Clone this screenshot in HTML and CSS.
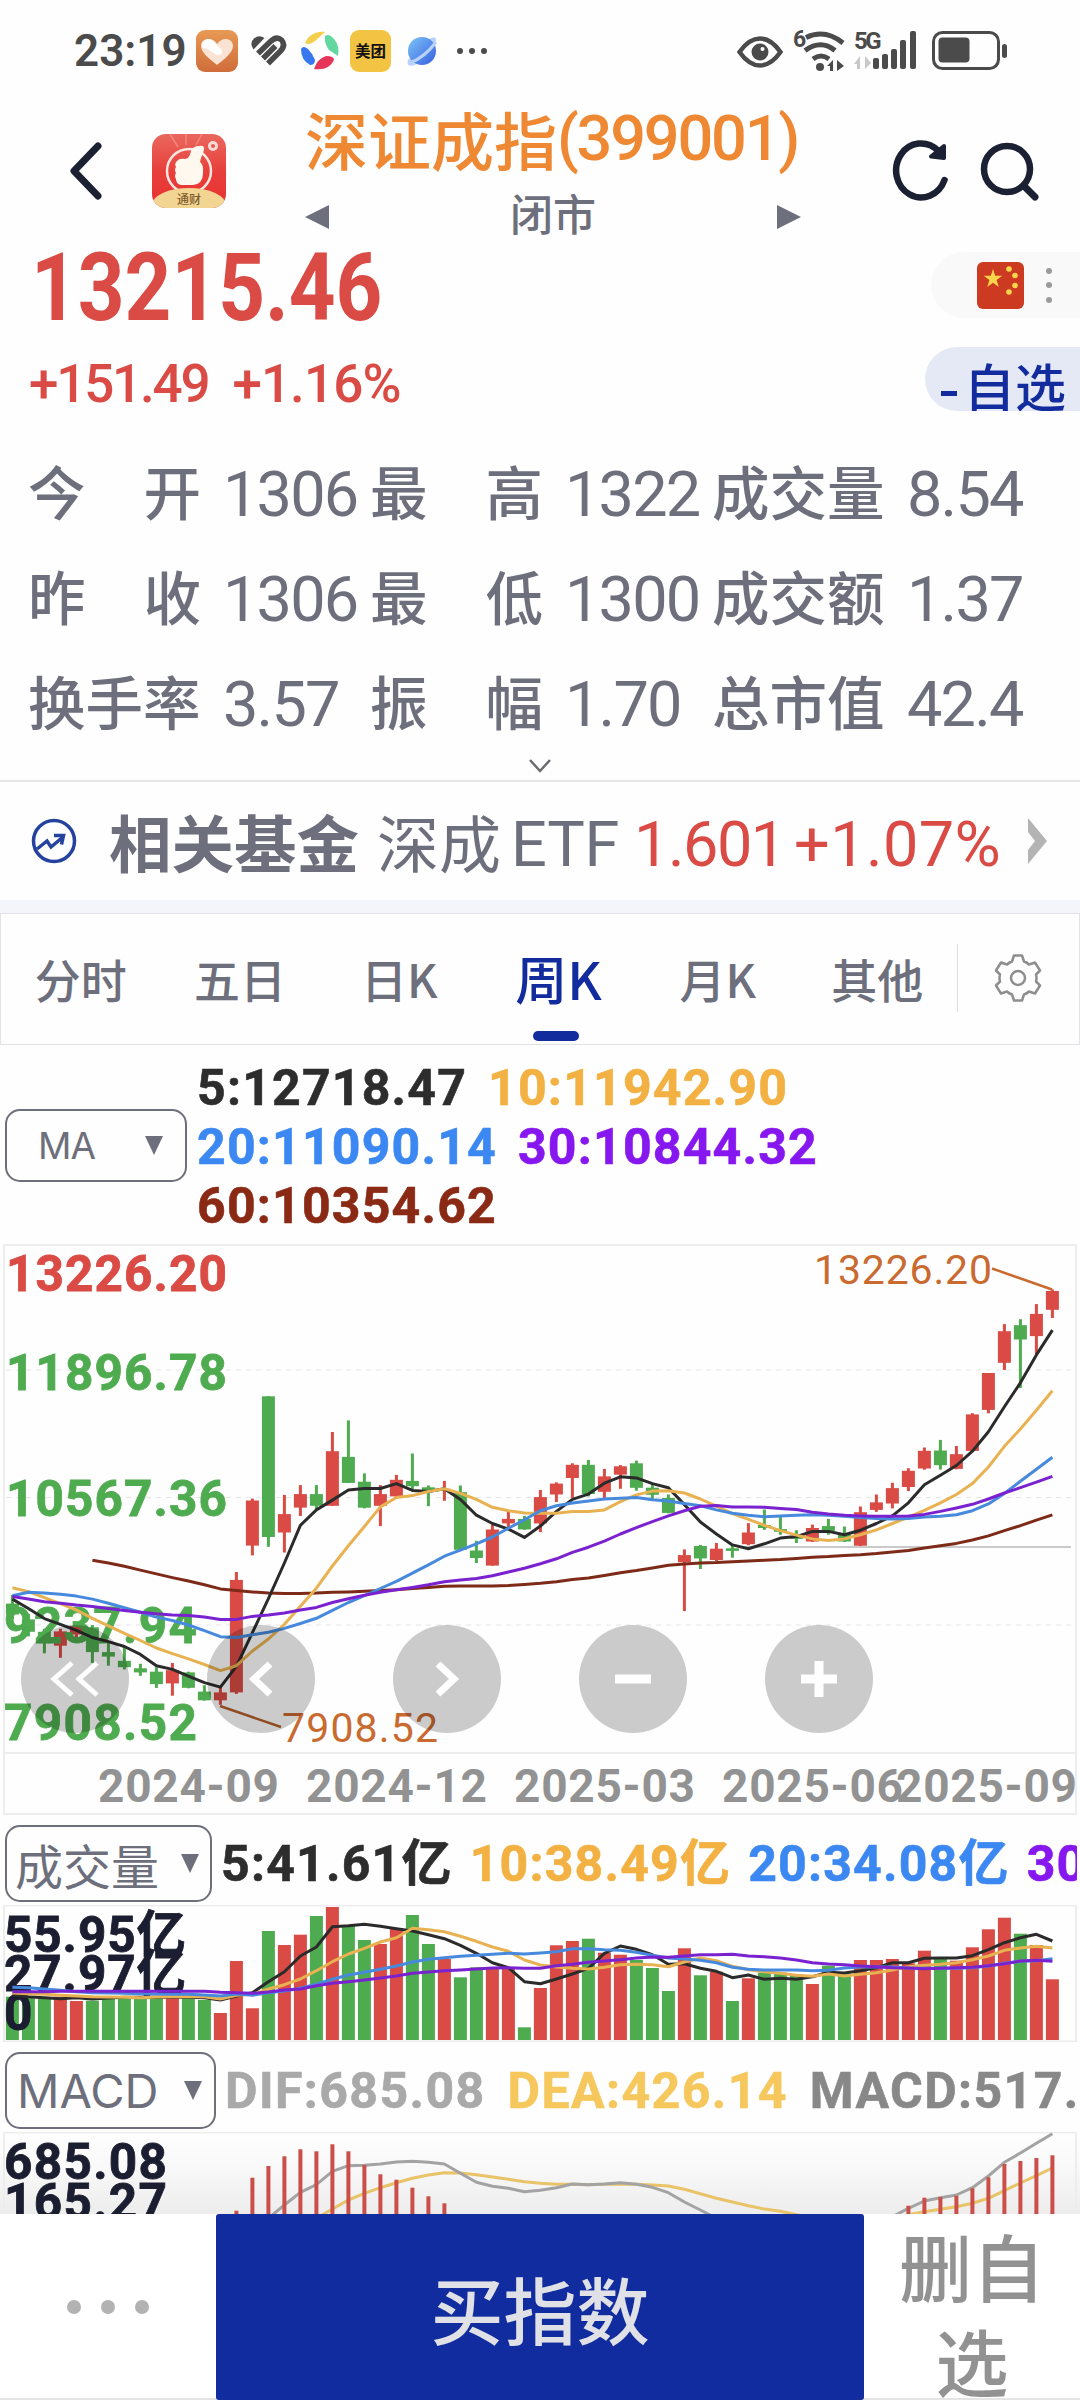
FILE: index.html
```html
<!DOCTYPE html>
<html lang="zh-CN">
<head>
<meta charset="utf-8">
<title>深证成指</title>
<link rel="stylesheet" href="styles.css">
</head>
<body>
<div class="screen">
  <div class="status">
    <span class="clock">23:19</span>
    <svg class="s-heart" width="42" height="42" viewBox="0 0 42 42"><defs><linearGradient id="og" x2="0" y2="1"><stop offset="0" stop-color="#e79a55"/><stop offset="1" stop-color="#cf6c3a"/></linearGradient></defs><rect width="42" height="42" rx="9" fill="url(#og)"/><path d="M21 35C14 29 5 23 5 16 5 11 9 9 12 9 17 9 20 12 21 14 23 11 26 9 30 9 34 9 37 12 37 16 37 23 27 30 21 35Z" fill="#fae3d2"/><path d="M6 17Q5 10 12 9q5 0 8 5l6 6q1 5-4 5-3 0-6-3-4-3-10-5z" fill="#fff"/></svg>
    <svg class="s-stripe" width="38" height="34" viewBox="0 0 38 34"><path d="M3.500 15.500Q-1 9 4 4.500 9 .5 14.500 4Z" fill="#4b4b4b"/><g fill="none" stroke="#4b4b4b" stroke-width="5.600"><path d="M8 19.500L20.500 7.500Q26.500 1.500 31.500 6 36 11 30.500 17L18 29.500"/><path d="M13 24.500L25.500 12"/></g></svg>
    <svg class="s-ring" width="40" height="40" viewBox="0 0 40 40"><path d="M5 12C9 3 17 0 25 1L15 10Q9 15 5 12Z" fill="#f3cf4b"/><path d="M25 5Q29 2 34 8 40 15 38 25L29 19Q24 12 25 5Z" fill="#62d7a0"/><path d="M1 18Q3 14 8 18 13 23 15 29 15 34 10 34 1 29 1 18Z" fill="#3778ef"/><path d="M14 38Q17 28 26 25 34 25 34 29 29 40 14 38Z" fill="#e63558"/></svg>
    <span class="meituan">美团</span>
    <svg class="s-planet" width="32" height="32" viewBox="0 0 32 32"><defs><linearGradient id="bg" x2="1" y2="1"><stop offset="0" stop-color="#7dc4f8"/><stop offset="1" stop-color="#365fe0"/></linearGradient></defs><path d="M23 4Q31 0 30 6L9 30Q0 33 2 25Z" fill="#b8d2fb"/><circle cx="16" cy="16" r="14" fill="url(#bg)"/><path d="M4 28Q19 22 30 7" fill="none" stroke="#b8d2fb" stroke-width="3"/></svg>
    <span class="s-more"><i></i><i></i><i></i></span>
    <svg class="s-eye" width="46" height="32" viewBox="0 0 46 32"><path d="M2.500 16Q12 2.500 23 2.500T43.500 16Q34 29.500 23 29.500T2.500 16Z" fill="none" stroke="#4b4b4b" stroke-width="4.500"/><circle cx="23" cy="16" r="8.500" fill="#4b4b4b"/><circle cx="25.500" cy="13" r="2" fill="#fff"/></svg>
    <svg class="s-wifi" width="52" height="44" viewBox="0 0 52 44"><text x="0" y="18" class="tiny six">6</text><g fill="none" stroke="#4b4b4b" stroke-width="5"><path d="M13 8.500Q32-.5 50 14M12 21.500Q28 10 42 21.500M20 30Q28 24 36 30"/></g><circle cx="27" cy="38" r="4" fill="#4b4b4b"/><path d="M34 37l6-6v11h-3v-5zM51 37l-7-6v11l7-5z" fill="#4b4b4b"/></svg>
    <svg class="s-signal" width="64" height="44" viewBox="0 0 64 44"><text x="0" y="20" class="tiny five">5G</text><path d="M0 35l6-8v13h-3v-5zM17 34l-6-7v13z" fill="#c8c8c8"/><g fill="#4b4b4b"><rect x="19" y="29" width="6" height="11" rx="2"/><rect x="28" y="25" width="6" height="15" rx="2"/><rect x="37" y="20" width="6" height="20" rx="2"/><rect x="46" y="11" width="6" height="29" rx="2"/><rect x="56" y="2" width="6" height="38" rx="2"/></g></svg>
    <svg class="s-batt" width="76" height="40" viewBox="0 0 76 40"><rect x="1.500" y="1.500" width="65" height="36" rx="9" fill="none" stroke="#4b4b4b" stroke-width="3"/><rect x="6.500" y="6.500" width="31" height="25" rx="4" fill="#4b4b4b"/><rect x="70" y="13" width="5" height="14" rx="2.500" fill="#4b4b4b"/></svg>
  </div>

  <header class="head">
    <svg class="back" width="36" height="60" viewBox="0 0 36 60"><path d="M30 5L6 30 30 55" fill="none" stroke="#1c2033" stroke-width="7" stroke-linecap="round" stroke-linejoin="round"/></svg>
    <svg class="app" width="74" height="74" viewBox="0 0 74 74"><defs><linearGradient id="rg" x2="0" y2="1"><stop offset="0" stop-color="#e9685e"/><stop offset=".5" stop-color="#e8403b"/><stop offset="1" stop-color="#e8302f"/></linearGradient><clipPath id="ac"><rect width="74" height="74" rx="14"/></clipPath></defs><g clip-path="url(#ac)"><rect width="74" height="74" fill="url(#rg)"/><path d="M26 13L18 0M34 11V0M44 11l6-11" stroke="#f0877a" stroke-width="1.500"/><circle cx="37" cy="37" r="22" fill="none" stroke="#ffe6e0" stroke-width="2.500"/><path d="M25 27Q27 24 33 25 38 24 39 17 41 12 47 12 53 11 52 16L49 24 48 28Q52 31 51 39 51 50 41 51H29Q24 50 24 45 22 42 24 39 22 36 24 33 22 30 25 27Z" fill="#fff8ee"/><circle cx="61" cy="12" r="5" fill="#fcdcd7"/><circle cx="61" cy="12" r="2" fill="#e8584f"/><ellipse cx="37" cy="71" rx="37" ry="17" fill="#f2d493"/><text x="37" y="70" class="applabel">通财</text></g></svg>
    <div class="title">
      <h1>深证成指<span>(399001)</span></h1>
      <div class="market"><i class="tri-l"></i><span>闭市</span><i class="tri-r"></i></div>
    </div>
    <svg class="refresh" width="64" height="64" viewBox="0 0 64 64"><path d="M46 11.500A25 27 0 1 0 52.500 41" fill="none" stroke="#1c2033" stroke-width="6.500" stroke-linecap="round"/><path d="M39 17.500L52 19 52 7Z" fill="#1c2033" stroke="#1c2033" stroke-width="4" stroke-linejoin="round"/></svg>
    <svg class="search" width="60" height="64" viewBox="0 0 60 64"><circle cx="28" cy="29" r="23" fill="none" stroke="#1c2033" stroke-width="6.500"/><path d="M45 46L56 57" stroke="#1c2033" stroke-width="7" stroke-linecap="round"/></svg>
  </header>

  <section class="quote">
    <div class="nums">
      <div class="price"><span>13215.46</span></div>
      <div class="change"><span>+151.49</span><span>+1.16%</span></div>
    </div>
    <div class="side">
      <div class="flagpill">
        <svg width="47" height="47" viewBox="0 0 47 47"><rect width="47" height="47" rx="6" fill="#cc3a22"/><g fill="#fbd64a"><path d="M16 7l2.200 6.800h7.100l-5.700 4.200 2.200 6.900-5.800-4.200-5.800 4.200 2.200-6.900-5.700-4.200h7.100z"/><circle cx="32" cy="7" r="2.800"/><circle cx="38" cy="13.500" r="2.800"/><circle cx="38" cy="23.500" r="2.800"/><circle cx="32" cy="30" r="2.800"/></g></svg>
        <svg width="8" height="40" viewBox="0 0 8 40" fill="#9a9a9a"><circle cx="4" cy="6" r="3"/><circle cx="4" cy="20" r="3"/><circle cx="4" cy="35" r="3"/></svg>
      </div>
      <div class="selpill"><i></i><span>自选</span></div>
    </div>
  </section>

  <section class="stats">
    <div class="lab"><span>今</span><span>开</span></div><b>1306</b><div class="lab"><span>最</span><span>高</span></div><b>1322</b><div class="lab"><span>成交量</span></div><b>8.54</b>
    <div class="lab"><span>昨</span><span>收</span></div><b>1306</b><div class="lab"><span>最</span><span>低</span></div><b>1300</b><div class="lab"><span>成交额</span></div><b>1.37</b>
    <div class="lab"><span>换手率</span></div><b>3.57</b><div class="lab"><span>振</span><span>幅</span></div><b>1.70</b><div class="lab"><span>总市值</span></div><b>42.4</b>
  </section>
  <div class="expand"><svg width="24" height="16" viewBox="0 0 24 16"><path d="M2 2L12 13 22 2" fill="none" stroke="#6b6b70" stroke-width="2.500"/></svg></div>

  <section class="fund">
    <svg class="ficon" width="48" height="48" viewBox="0 0 48 48" fill="none" stroke="#25429f" stroke-width="3.500"><circle cx="24" cy="24" r="20.500"/><path d="M7 32L17 24 21 30 33 20M24 18.500h9.500l-2 9"/></svg>
    <span class="fname">相关基金</span><span class="fsub">深成</span><span class="etf">ETF</span><span class="fval">1.601</span><span class="fpct">+1.07%</span>
    <svg class="farr" width="22" height="48" viewBox="0 0 22 48"><path d="M1 1L20 24 1 47V33L8 24 1 15Z" fill="#b4b4b4"/></svg>
  </section>
  <div class="band"></div>

  <nav class="tabs">
    <span>分时</span><span>五日</span><span>日K</span><span class="on">周K</span><span>月K</span><span>其他</span>
    <div class="set"><svg width="50" height="50" viewBox="0 0 50 50" fill="none" stroke="#8e8e8e" stroke-width="2.500" stroke-linejoin="round"><path d="M21 2.500h8l2 6q3 1 5 3l6-2 5 8-4 4q1 3.500 0 7l4 4-5 8-6-2q-2 2-5 3l-2 6h-8l-2-6q-3-1-5-3l-6 2-5-8 4-4q-1-3.500 0-7l-4-4 5-8 6 2q2-2 5-3z"/><circle cx="25" cy="25" r="7"/></svg></div>
  </nav>

  <section class="legend">
    <div class="select ma"><span>MA</span><i></i></div>
    <div class="vals"><span class="k">5:12718.47</span><span class="o">10:11942.90</span><span class="b">20:11090.14</span><span class="p">30:10844.32</span><span class="r">60:10354.62</span></div>
  </section>

  <section class="pricechart">
    <svg id="price" width="1080" height="571"></svg>
    <div class="ctl">
      <button><svg width="50" height="40" viewBox="0 0 50 40"><path d="M22 4L4 20 22 36M47 4L29 20 47 36" class="w thin"/></svg></button>
      <button><svg width="30" height="40" viewBox="0 0 30 40"><path d="M24 5L8 20 24 35" class="w"/></svg></button>
      <button><svg width="30" height="40" viewBox="0 0 30 40"><path d="M6 5L22 20 6 35" class="w"/></svg></button>
      <button><svg width="36" height="36" viewBox="0 0 36 36"><path d="M0 18H36" class="w bold"/></svg></button>
      <button><svg width="36" height="36" viewBox="0 0 36 36"><path d="M0 18H36M18 0V36" class="w bold"/></svg></button>
    </div>
  </section>

  <section class="subhead">
    <div class="select vol"><span>成交量</span><i></i></div>
    <div class="line"><span class="k">5:41.61亿</span><span class="o">10:38.49亿</span><span class="b">20:34.08亿</span><span class="p">30:32.93亿</span></div>
  </section>
  <svg id="volume" width="1080" height="137"></svg>
  <section class="subhead">
    <div class="select macd"><span>MACD</span><i></i></div>
    <div class="line m"><span class="dif">DIF:685.08</span><span class="dea">DEA:426.14</span><span class="mac">MACD:517.88</span></div>
  </section>
  <svg id="macd" width="1080" height="82"></svg>

  <footer class="bar">
    <div class="more"><i></i><i></i><i></i></div>
    <div class="buy">买指数</div>
    <div class="del">删自选</div>
  </footer>
</div>
<script src="chart.js"></script>
</body>
</html>
```
FILE: styles.css
```css
*{box-sizing:border-box}
body{margin:0;background:#fff}
.screen{width:1080px;height:2400px;overflow:hidden;display:flex;flex-direction:column;background:#fefefe;font-family:Roboto,"Noto Sans CJK SC",sans-serif;color:#6d6f7c}
.screen>*{flex:none}
svg{display:block;flex:none}
i{display:block}

.status{height:102px;display:flex;align-items:center;padding-left:74px;color:#4b4b4b}
.clock{font-size:44px;font-weight:600;width:122px;white-space:nowrap}
.s-stripe{margin-left:12px}
.s-ring{margin-left:12px}
.meituan{margin-left:10px;width:41px;height:42px;border-radius:9px;background:#f3c443;color:#111;font:700 15.500px/41px "Noto Sans CJK SC",sans-serif;text-align:center}
.s-planet{margin-left:15px}
.s-more{display:flex;gap:6px;margin-left:19px}
.s-more i{width:6px;height:6px;border-radius:3px;background:#4b4b4b}
.s-eye{margin-left:250px;margin-top:2px}
.s-wifi{margin-left:10px;overflow:visible}
.s-signal{margin-left:9px;overflow:visible}
.s-batt{margin-left:14px}
.tiny{font:700 24px Roboto,sans-serif;fill:#4b4b4b}
.six{font-size:23px}
.five{letter-spacing:-2.500px}

.head{height:146px;display:flex;align-items:flex-start;padding-left:68px}
.back{margin-top:39px}
.app{margin:32px 0 0 48px}
.applabel{font:500 12px "Noto Sans CJK SC",sans-serif;fill:#7c5a2c;text-anchor:middle}
.title{width:496px;margin-left:79px}
h1{margin:0;height:75px;font:500 63px/71px "Noto Sans CJK SC",sans-serif;color:#ee8833;white-space:nowrap;display:flex}
h1 span{font:500 63px/74px Roboto,sans-serif;letter-spacing:-2.200px}
.market{display:flex;justify-content:space-between;align-items:center;font:500 43px/72px "Noto Sans CJK SC",sans-serif;height:72px;padding-bottom:2px}
.tri-l{width:0;height:0;border:12px solid transparent;border-right:24px solid #6d6f7c;border-left:0;margin-top:10px}
.tri-r{width:0;height:0;border:12px solid transparent;border-left:24px solid #6d6f7c;border-right:0;margin-top:10px}
.refresh{margin:37px 0 0 91px}
.search{margin:38px 0 0 23px}

.quote{height:192px;display:flex;justify-content:space-between;color:#d94b44}
.nums{padding-left:29px}
.price{height:96px;font-size:94px;font-weight:700;line-height:80px;padding-left:2px}
.price span{display:inline-block;transform:scaleX(.868);transform-origin:0 0}
.change{display:flex;gap:24px;font-size:53px;line-height:78px;margin-top:1px;font-weight:500}
.change span{letter-spacing:-2.200px}
.change span+span{letter-spacing:-.9px}
.side{display:flex;flex-direction:column;align-items:flex-end}
.flagpill{margin-top:4px;width:149px;height:66px;border-radius:33px 0 0 33px;background:#f9f9f9;display:flex;align-items:center;gap:21px;padding-left:46px}
.selpill{margin-top:29px;width:155px;height:64px;border-radius:32px 0 0 32px;background:#e5e9f6;overflow:hidden;display:flex;padding-left:16px;font:500 51px/76px "Noto Sans CJK SC",sans-serif;color:#122c9e}
.selpill i{width:16px;height:5px;background:#122c9e;margin:44px 7px 0 0}

.stats{height:315px;display:grid;grid-template-columns:195px 147px 195px 147px 195px 160px;grid-auto-rows:105px;align-items:center;padding-left:28px;font:500 57.500px/100px "Noto Sans CJK SC",sans-serif}
.lab{display:flex;justify-content:space-between;width:173px;white-space:nowrap;position:relative;top:-3px}
.stats b{font:400 63px/100px Roboto,sans-serif;letter-spacing:-1.800px;padding-top:4px}
.expand{height:27px;border-bottom:2px solid #e6e6e6;display:flex;justify-content:center;padding-top:3px}

.fund{height:118px;display:flex;align-items:center;white-space:nowrap;font-size:63px;line-height:108px}
.ficon{margin-left:30px}
.fname{margin-left:31px;font:700 62.500px/100px "Noto Sans CJK SC",sans-serif;width:268px}
.fsub{font:400 62px/100px "Noto Sans CJK SC",sans-serif;width:134px}
.etf{width:123px;letter-spacing:-.2px}
.fval{width:160px;letter-spacing:-1.500px;color:#d94b44}
.fpct{width:233px;letter-spacing:.4px;color:#d94b44}
.fund .etf,.fund .fval,.fund .fpct{padding-top:8px}
.band{height:13px;background:#f4f5fa}

.tabs{height:132px;border:1px solid #e3e3e5;display:flex;align-items:center;font:500 46px/120px "Noto Sans CJK SC",sans-serif;padding-bottom:2px}
.tabs>span{width:159.300px;text-align:center}
.tabs .on{font-size:52px;color:#122c9e;position:relative}
.tabs .on::after{content:"";position:absolute;left:54px;bottom:-3px;width:46px;height:10px;border-radius:5px;background:#122c9e}
.set{flex:1;height:68px;border-left:1px solid #dedee0;display:flex;align-items:center;justify-content:center}

.legend{height:199px;display:flex;align-items:center;padding-left:5px;padding-top:2px}
.select{border:2px solid #6d6f7c;border-radius:15px;display:flex;align-items:center;flex:none;white-space:nowrap}
.select i{width:0;height:0;border:9.500px solid transparent;border-top:19px solid #6d6f7c;border-bottom:0}
.ma{width:182px;height:73px;font:400 37px Inter,sans-serif;padding:0 22px 0 31px;justify-content:space-between;letter-spacing:-1px}
.vals{margin-left:10px;display:flex;flex-wrap:wrap;width:660px;column-gap:21px;font:700 50px/59px Roboto,sans-serif;letter-spacing:1.200px;padding-top:4px}
.vals span,.line span{white-space:nowrap}
.vals,.line{-webkit-text-stroke:.6px}
.k{color:#2d2d2d}.o{color:#f2b142}.b{color:#3c88f2}.p{color:#8717ef}.r{color:#8a2a15}

.pricechart{height:571px;position:relative}
.ctl{position:absolute;left:21px;top:381px;display:flex;gap:78px}
.ctl button{width:108px;height:108px;border:0;border-radius:54px;background:rgba(0,0,0,.2);display:flex;align-items:center;justify-content:center;padding:0}
.w{fill:none;stroke:#fff;stroke-width:7}
.thin{stroke-width:5}
.bold{stroke-width:9}

.subhead{height:90px;display:flex;align-items:center;width:1077px;overflow:hidden;padding:7px 0 0 5px}
.vol{width:207px;height:77px;font:400 48px/70px "Noto Sans CJK SC",sans-serif;padding:0 11px 0 8px;justify-content:space-between}
.macd{width:211px;height:77px;font:400 47px/70px Inter,sans-serif;padding:0 12px 0 10px;justify-content:space-between}
.line{display:flex;gap:17px;margin-left:9px;font:700 50px/70px Roboto,"Noto Sans CJK SC",sans-serif;letter-spacing:1.200px;padding-top:1px}
.line.m{gap:22px;letter-spacing:1.400px}
.dif{color:#a9a9a9}.dea{color:#f6c75c}.mac{color:#888}

.ax{font:700 49.500px Roboto,"Noto Sans CJK SC",sans-serif}
.tip{font:400 41px Roboto,sans-serif;fill:#c96a30}
.date{font:700 46px Roboto,sans-serif;fill:#929292}

.bar{height:186px;display:flex;background:#fff;border-bottom:2px solid #e5e5e5}
.more{width:216px;display:flex;align-items:center;justify-content:center;gap:20px;padding-top:2px}
.more i{width:14px;height:14px;border-radius:7px;background:#b2b2b2}
.buy{width:648px;height:186px;background:#102c9f;border-radius:3px;color:#e0e1e6;font:500 73px/187px "Noto Sans CJK SC",sans-serif;text-align:center}
.del{width:216px;padding:3px 33px 0;font:500 73px/95px "Noto Sans CJK SC",sans-serif;color:#929292;text-align:center}
```
FILE: chart.js
```js
const RED = '#d94b44', GREEN = '#4fab4f';
const X0 = 12.4, STEP = 16, BW = 13;
const cx = i => X0 + i * STEP;

// direction, body top, body bottom, high, low
const candles = `G 993 1022 970 1035;G 1035 1068 1020 1080;G 1068 1098 1060 1125;R 1067 1105 1060 1137;R 1052 1075 1048 1095;G 1056 1122 1050 1151;G 1122 1134 1095 1158;G 1145 1162 1110 1168;G 1165 1176 1153 1185;G 1174 1207 1162 1217;R 1170 1205 1151 1238;G 1176 1217 1174 1218;G 1227 1250 1210 1251;R 1229 1250 1215 1262;R 930 1229 909 1233;R 719 839 714 865;G 442 816 442 842;R 755 804 704 857;R 702 738 678 760;G 702 733 678 744;R 588 733 537 733;G 603 672 506 672;G 669 738 647 740;R 702 733 678 787;R 664 708 651 710;G 667 681 594 690;G 684 694 679 734;R 688 692 667 720;G 697 850 679 850;G 852 872 826 885;R 796 892 783 892;R 768 780 748 790;G 768 796 760 797;R 710 780 691 803;R 674 703 671 723;R 624 659 620 712;G 624 702 611 708;R 655 696 635 713;R 628 650 625 688;G 620 685 613 693;G 685 704 673 715;G 712 752 703 753;R 864 883 849 1013;G 840 873 837 901;R 847 877 832 880;G 846 853 840 871;R 804 835 779 838;G 784 792 743 797;G 795 802 758 810;G 815 821 798 832;R 792 828 783 829;G 787 801 768 810;G 808 828 788 829;R 750 839 735 840;R 724 744 703 749;R 686 727 672 740;R 640 683 633 694;R 587 634 578 637;G 586 625 558 637;R 596 635 574 636;R 490 587 487 588;R 380 478 380 487;R 269 353 250 372;G 253 291 237 420;R 223 282 197 330;R 162 212 158 234`
  .split(';').map(s => { const [d, ...v] = s.split(' '); return [d, ...v.map(Number)]; });

const ma = [
  ['#7d2a18', 5, [878,885,894,904,914,924,933,943,954,958,962,965,966,966,965,963,962,960,958,956,953,950,947,946,946,946,945,942,939,935,929,925,918,911,905,898,891,888,885,884,882,880,878,876,873,870,868,865,863,860,856,852,845,839,833,824,813,799,786,771,757]],
  ['#2b2b2b', 0, [981,1006,1033,1048,1064,1083,1094,1107,1128,1158,1168,1186,1203,1215,1160,1070,980,885,785,744,718,691,687,687,674,692,695,688,716,758,780,795,817,787,748,716,702,673,656,659,674,685,730,776,808,837,847,834,819,815,801,801,810,798,780,760,725,677,652,626,588,536,470,406,332,266]],
  ['#e8b252', 0, [951,961,977,993,1010,1032,1052,1072,1091,1111,1126,1140,1155,1171,1158,1119,1087,1048,1000,952,893,839,788,736,711,706,695,688,700,716,737,746,752,753,753,748,748,744,722,704,694,693,699,715,734,754,769,785,799,811,821,825,821,810,797,780,763,745,725,703,674,630,575,529,479,427]],
  ['#4689dd', 0, [972,963,965,968,973,981,992,1004,1016,1029,1038,1050,1065,1081,1083,1076,1069,1059,1046,1032,1011,990,972,953,934,912,890,867,851,834,816,793,770,746,733,726,720,715,713,711,717,720,727,733,744,753,758,762,760,758,757,758,761,764,767,768,767,763,761,757,746,728,700,668,636,604]],
  ['#7b22d0', 0, [974,981,988,992,997,1001,1006,1011,1016,1020,1023,1025,1029,1035,1035,1027,1023,1018,1010,1003,990,980,971,963,956,950,943,935,930,926,919,909,899,887,874,857,843,827,808,791,775,760,746,734,732,736,736,737,740,743,750,755,758,760,761,761,760,756,748,739,729,715,699,685,670,655]]
];

const vol = [560,560,565,560,573,572,562,560,560,558,560,562,570,609,453,595,363,405,374,318,291,345,390,402,355,315,402,447,502,472,475,475,652,534,406,393,386,428,434,450,474,543,415,496,485,573,505,488,488,495,522,467,490,450,450,447,460,422,444,452,412,358,323,371,405,508];
const volMa = [
  ['#2b2b2b', 0, [555,560,563,566,563,567,564,562,562,562,562,562,563,570,558,548,515,485,438,411,350,347,343,349,356,363,374,386,406,430,458,473,515,521,507,492,475,430,408,418,434,463,461,475,484,503,495,508,505,508,500,487,489,482,473,458,458,445,444,444,437,419,398,383,373,393]],
  ['#e8b252', 0, [549,551,553,556,558,560,561,562,563,561,560,560,560,567,556,553,537,524,507,482,455,432,415,396,383,355,359,365,379,394,411,424,450,465,471,475,477,472,464,463,464,470,456,444,452,469,479,485,490,496,499,492,498,493,488,480,470,466,463,458,449,438,421,414,409,414]],
  ['#4689dd', 0, [532,533,537,541,545,548,549,550,551,552,553,553,555,558,552,556,548,543,535,523,508,495,487,478,468,456,448,443,439,436,433,430,432,429,425,416,416,419,421,427,436,444,447,451,458,472,478,480,480,480,482,481,474,471,470,471,474,475,475,475,473,468,460,454,452,446]],
  ['#7b22d0', 0, [545,545,545,544,544,544,544,544,544,544,544,544,544,547,548,550,546,540,537,527,520,515,510,504,498,490,486,482,480,477,474,473,475,475,467,463,457,453,449,444,441,442,438,434,434,433,438,440,444,450,458,462,464,468,470,473,474,476,475,473,472,467,461,453,451,454]]
];

const hist = { 14:1202,15:1103,16:1068,17:1039,18:1018,19:1024,20:1003,21:1024,22:1065,23:1093,24:1109,25:1133,26:1159,27:1180,56:1187,57:1163,58:1161,59:1157,60:1135,61:1102,62:1062,63:1053,64:1044,65:1036 };
const macdLines = [
  ['#e8c368', 19, [1225,1197,1170,1150,1133,1118,1105,1095,1088,1089,1094,1101,1108,1115,1120,1123,1123,1124,1123,1123,1123,1125,1128,1138,1151,1165,1176,1187,1197,1204,1214,1225]],
  ['#e8c368', 55, [1225,1214,1205,1198,1190,1180,1165,1142,1119,1097,1074]],
  ['#a3a3a3', 16, [1225,1185,1147,1124,1084,1067,1066,1062,1056,1054,1057,1062,1090,1117,1129,1135,1145,1141,1133,1122,1124,1122,1118,1123,1132,1148,1176,1200,1225]],
  ['#a3a3a3', 55, [1220,1195,1173,1163,1155,1133,1098,1057,1029,1000,971]]
];

const rect = (x, y, w, h, c, extra = '') => `<rect x="${x.toFixed(1)}" y="${y.toFixed(1)}" width="${w}" height="${Math.max(h, 1).toFixed(1)}" fill="${c}" ${extra}/>`;
const line = (x1, y1, x2, y2, c, w, extra = '') => `<line x1="${x1}" y1="${y1}" x2="${x2}" y2="${y2}" stroke="${c}" stroke-width="${w}" ${extra}/>`;
const poly = ([c, s, v], y, w = 3) => `<polyline points="${v.map((n, i) => cx(s + i).toFixed(1) + ',' + y(n).toFixed(1)).join(' ')}" fill="none" stroke="${c}" stroke-width="${w}" stroke-linejoin="round"/>`;
const text = (s, x, y, w, cls, fill = '') => `<text x="${x}" y="${y}" textLength="${w}" class="${cls}" ${fill && `fill="${fill}" stroke="${fill}" stroke-width=".8"`}>${s}</text>`;
const frame = (y, h) => `<rect x="4" y="${y}" width="1072" height="${h}" fill="none" stroke="#ededee" stroke-width="2"/>`;

{
  const y = v => (v - 37.2) / 2.658;
  let s = frame(1, 508) + frame(509, 61);
  for (const g of [126, 253.5, 381]) s += line(6, g, 1071, g, '#e6e6e6', 1, 'stroke-dasharray="5 5"');
  s += line(745, 303, 1071, 303, '#cacaca', 2);
  candles.forEach(([d, t, b, hi, lo], i) => {
    const c = d === 'R' ? RED : GREEN;
    s += rect(cx(i) - 1.5, y(hi), 3, y(lo) - y(hi), c) + rect(cx(i) - BW / 2, y(t), BW, y(b) - y(t), c);
  });
  s += text('13226.20', 6, 47, 221, 'ax', RED) + text('11896.78', 6, 145.500, 221, 'ax', GREEN) + text('10567.36', 6, 272, 221, 'ax', GREEN)
    + text('9237.94', 4, 399, 193, 'ax', GREEN) + text('7908.52', 4, 496, 193, 'ax', GREEN);
  ma.forEach(m => s += poly(m, y));
  s += line(220, 462, 281, 483, '#b4602c', 2.5) + line(992, 24.5, 1052, 45.5, '#c96a30', 2.5);
  s += text('7908.52', 282, 498, 156, 'tip') + text('13226.20', 814, 40, 178, 'tip');
  [['2024-09', 98], ['2024-12', 306], ['2025-03', 514], ['2025-06', 722], ['2025-09', 896]].forEach(([t, x]) => s += text(t, x, 558, 181, 'date'));
  document.getElementById('price').innerHTML = s;
}
{
  const y = v => (v - 285) / 3;
  let s = frame(0.5, 136);
  vol.forEach((v, i) => s += rect(cx(i) - BW / 2, y(v), BW, 135 - y(v), candles[i][0] === 'R' ? RED : GREEN));
  s += text('55.95亿', 4, 47, 182, 'ax', '#1b1e30') + text('27.97亿', 4, 86, 182, 'ax', '#1b1e30') + text('0', 4, 125, 28, 'ax', '#1b1e30');
  volMa.forEach(m => s += poly(m, y));
  document.getElementById('volume').innerHTML = s;
}
{
  const y = v => (v - 966) / 3;
  let s = '<defs><linearGradient id="sh" x2="0" y2="1"><stop offset="0" stop-color="#fefefe"/><stop offset=".4" stop-color="#f9f9f9"/><stop offset="1" stop-color="#ededed"/></linearGradient></defs><rect width="1080" height="82" fill="url(#sh)"/>' + frame(0.5, 100);
  macdLines.forEach(m => s += poly(m, y));
  for (const i in hist) s += rect(cx(+i) - 2, y(hist[i]), 4, 90, '#c94f48');
  s += text('685.08', 4, 47, 163, 'ax', '#1b1e30') + text('165.27', 4, 87, 163, 'ax', '#1b1e30');
  document.getElementById('macd').innerHTML = s;
}
```
